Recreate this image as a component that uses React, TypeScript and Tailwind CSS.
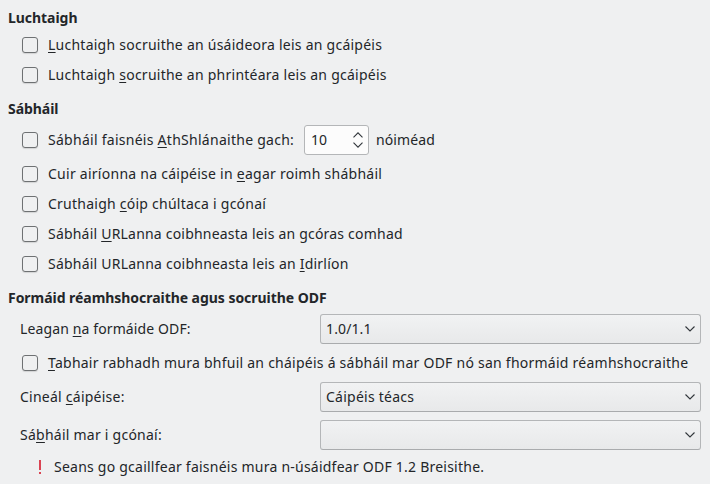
import React from "react";

function Box() {
  return <span className="mr-[10px] size-4 shrink-0 rounded-[3px] border border-[#6e7173] bg-[#eff0f1] shadow-[0_1px_1px_rgba(0,0,0,0.12)]" />;
}

function Label({ text }: { text: string }) {
  const [before, key, after] = text.split("_");
  return (
    <span className="whitespace-pre">
      {before}
      {key && <span className="underline decoration-1 underline-offset-2 [text-decoration-skip-ink:none]">{key}</span>}
      {after}
    </span>
  );
}

function Check({ text, className = "" }: { text: string; className?: string }) {
  return (
    <label className={`flex h-[30px] items-center pl-[22px] ${className}`}>
      <Box />
      <Label text={text} />
    </label>
  );
}

function Heading({ children }: { children: React.ReactNode }) {
  return <h2 className="flex h-5 items-center pl-2 font-bold tracking-[-0.045px]">{children}</h2>;
}

function Row({ label, value, className = "" }: { label: string; value: string; className?: string }) {
  return (
    <div className={`flex h-[30px] items-center pl-5 ${className}`}>
      <div className="w-[300px]">
        <Label text={label} />
      </div>
      <div className="flex h-[30px] w-[381px] items-center justify-between rounded-[3px] border border-[#b4b6b8] border-b-[#a9abad] bg-linear-to-b from-[#f1f2f3] to-[#e8e9ea] pr-[5px] pl-[5px]">
        <span>{value}</span>
        <svg width="10" height="6" viewBox="0 0 10 6" fill="none" stroke="#31363b" strokeWidth="1.1">
          <path d="M.5 .5 5 5 9.5 .5" />
        </svg>
      </div>
    </div>
  );
}

export default function App() {
  return (
    <main className="h-[484px] w-[710px] overflow-hidden bg-[#eff0f1] pt-2 font-['Noto_Sans',sans-serif] text-[14px] leading-5 tracking-[0.245px] text-[#232629]">
      <Heading>Luchtaigh</Heading>
      <div className="mt-0.5">
        <Check text="_L_uchtaigh socruithe an úsáideora leis an gcáipéis" />
        <Check text="Luchtaigh _s_ocruithe an phrintéara leis an gcáipéis" />
      </div>
      <div className="mt-[9px]">
        <Heading>Sábháil</Heading>
      </div>
      <div className="mt-1.5 flex h-[30px] items-center pl-[22px]">
        <Box />
        <div className="w-[256px] tracking-[0.27px]">
          <Label text="Sábháil faisnéis _A_thShlánaithe gach:" />
        </div>
        <div className="mr-[7px] flex h-[30px] w-[65px] items-center justify-between rounded-[3px] border border-[#b4b6b8] bg-[#fcfcfc] pr-[5px] pl-[6px]">
          <span className="tracking-normal">10</span>
          <svg width="10" height="16" viewBox="0 0 10 16" fill="none" stroke="#31363b" strokeWidth="1.1">
            <path d="M.5 5.3 5 .8 9.5 5.3M.5 10.7 5 15.2 9.5 10.7" />
          </svg>
        </div>
        <span className="tracking-[0.12px]">nóiméad</span>
      </div>
      <div className="mt-1">
        <Check text="Cuir airíonna na cáipéise in _e_agar roimh shábháil" className="tracking-[0.26px]" />
        <Check text="Cruthaigh _c_óip chúltaca i gcónaí" />
        <Check text="Sábháil _U_RLanna coibhneasta leis an gcóras comhad" className="tracking-[0.205px]" />
        <Check text="Sábháil URLanna coibhneasta leis an _I_dirlíon" className="tracking-[0.22px]" />
      </div>
      <div className="mt-[9px]">
        <Heading>Formáid réamhshocraithe agus socruithe ODF</Heading>
      </div>
      <div className="mt-1.5">
        <Row label="Leagan _n_a formáide ODF:" value="1.0/1.1" className="tracking-[0.12px]" />
      </div>
      <div className="mt-1">
        <Check text="_T_abhair rabhadh mura bhfuil an cháipéis á sábháil mar ODF nó san fhormáid réamhshocraithe" />
      </div>
      <div className="mt-1 flex flex-col gap-2">
        <Row label="Cineál _c_áipéise:" value="Cáipéis téacs" />
        <Row label="Sá_b_háil mar i gcónaí:" value="" />
      </div>
      <div className="mt-[7px] flex h-5 items-center pl-[38px] tracking-[0.235px]">
        <svg className="mr-[12px]" width="4" height="14" viewBox="0 0 4 14" fill="#da4453">
          <path d="M1 0h2v10H1zM1 12h2v2H1z" />
        </svg>
        <span>Seans go gcaillfear faisnéis mura n-úsáidfear ODF 1.2 Breisithe.</span>
      </div>
    </main>
  );
}
